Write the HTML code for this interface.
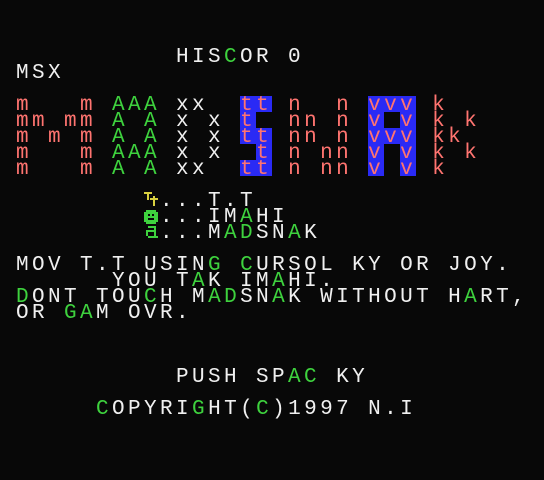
<!DOCTYPE html>
<html><head><meta charset="utf-8"><style>
html,body{margin:0;padding:0;background:#080808;}
#s{position:relative;width:544px;height:480px;overflow:hidden;background:#080808;}
.r{position:absolute;left:16px;margin:0;white-space:pre;font-family:"Liberation Mono",monospace;font-size:21px;letter-spacing:3.4px;line-height:16px;height:16px;color:#f0f0f0;transform:translateY(2px);}
.g{color:#3ed23e}.m{color:#ff7470}
.b{position:absolute;width:16px;height:16px;background:#2a2af5;}
</style></head><body><div id="s">
<div class="b" style="left:240px;top:96px;width:32px"></div>
<div class="b" style="left:240px;top:112px"></div>
<div class="b" style="left:240px;top:128px;width:32px"></div>
<div class="b" style="left:256px;top:144px"></div>
<div class="b" style="left:240px;top:160px;width:32px"></div>
<div class="b" style="left:368px;top:96px;width:48px"></div>
<div class="b" style="left:368px;top:112px"></div><div class="b" style="left:400px;top:112px"></div>
<div class="b" style="left:368px;top:128px;width:48px"></div>
<div class="b" style="left:368px;top:144px"></div><div class="b" style="left:400px;top:144px"></div>
<div class="b" style="left:368px;top:160px"></div><div class="b" style="left:400px;top:160px"></div>

<div class="r" style="top:48px">          HIS<span class="g">C</span>OR 0</div>
<div class="r" style="top:64px">MSX</div>
<div class="r" style="top:96px"><span class="m">m   m</span> <span class="g">AAA</span> xx  <span class="m">tt n  n vvv k</span></div>
<div class="r" style="top:112px"><span class="m">mm mm</span> <span class="g">A A</span> x x <span class="m">t  nn n v v k k</span></div>
<div class="r" style="top:128px"><span class="m">m m m</span> <span class="g">A A</span> x x <span class="m">tt nn n vvv kk</span></div>
<div class="r" style="top:144px"><span class="m">m   m</span> <span class="g">AAA</span> x x <span class="m"> t n nn v v k k</span></div>
<div class="r" style="top:160px"><span class="m">m   m</span> <span class="g">A A</span> xx  <span class="m">tt n nn v v k</span></div>

<div class="r" style="top:192px">         ...T.T</div>
<div class="r" style="top:208px">         ...IM<span class="g">A</span>HI</div>
<div class="r" style="top:224px">         ...M<span class="g">AD</span>SN<span class="g">A</span>K</div>
<svg style="position:absolute;left:144px;top:192px" width="16" height="48" viewBox="0 0 16 48">
<g fill="#d8d040"><rect x="0" y="0" width="8" height="2"/><rect x="3" y="0" width="2" height="8"/><rect x="6" y="6" width="8" height="2"/><rect x="9" y="4" width="2" height="10"/></g>
<g fill="#3ed23e"><rect x="2" y="18" width="10" height="2"/><rect x="0" y="20" width="14" height="10"/><rect x="2" y="30" width="10" height="2"/></g>
<g fill="#080808"><rect x="4" y="22" width="2" height="2"/><rect x="8" y="22" width="2" height="2"/><rect x="4" y="26" width="6" height="2"/></g>
<g fill="#3ed23e"><rect x="4" y="34" width="8" height="2"/><rect x="10" y="34" width="2" height="10"/><rect x="2" y="38" width="2" height="6"/><rect x="4" y="38" width="6" height="2"/><rect x="4" y="44" width="10" height="2"/></g>
</svg>

<div class="r" style="top:256px">MOV T.T USIN<span class="g">G</span> <span class="g">C</span>URSOL KY OR JOY.</div>
<div class="r" style="top:272px">      YOU T<span class="g">A</span>K IM<span class="g">A</span>HI.</div>
<div class="r" style="top:288px"><span class="g">D</span>ONT TOU<span class="g">C</span>H M<span class="g">AD</span>SN<span class="g">A</span>K WITHOUT H<span class="g">A</span>RT,</div>
<div class="r" style="top:304px">OR <span class="g">GA</span>M OVR.</div>
<div class="r" style="top:368px">          PUSH SP<span class="g">AC</span> KY</div>
<div class="r" style="top:400px">     <span class="g">C</span>OPYRI<span class="g">G</span>HT(<span class="g">C</span>)1997 N.I</div>
</div></body></html>
